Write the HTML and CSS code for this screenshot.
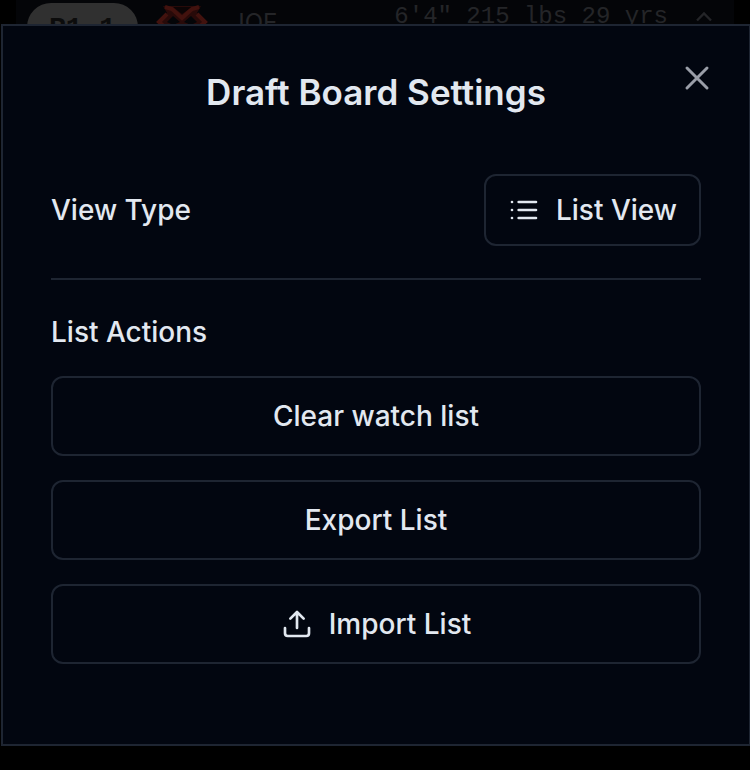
FILE: index.html
```html
<!DOCTYPE html>
<html lang="en">
<head>
<meta charset="utf-8">
<meta name="viewport" content="width=device-width, initial-scale=1">
<title>Draft Board Settings</title>
<link rel="stylesheet" href="styles.css">
</head>
<body>
<div class="board" aria-hidden="true">
  <div class="player">
    <span class="pick">R1.1</span>
    <svg class="team" viewBox="0 0 54 40">
      <path fill="#280a09" d="M8 3H46L42 10 52 19 46 30 27 38 8 30 2 19 12 10Z"/>
      <path fill="#0c0405" d="M18 4H37L27 11Z"/>
      <path fill="#040508" d="M18 13 25 19 18 22 12 19ZM36 13 29 19 36 22 42 19Z"/>
      <path fill="none" stroke="#42120e" stroke-width="4" d="M10 4 17 6 27 15 37 6 44 4M12 11 4 19 11 25M42 11 50 19 43 25"/>
    </svg>
    <span class="first-name">JOE</span>
    <span class="vitals">6'4" 215 lbs 29 yrs</span>
    <svg class="chevron" viewBox="0 0 24 24"><path d="m6 15 6-6 6 6"/></svg>
  </div>
</div>
<main class="dialog" role="dialog" aria-labelledby="title">
  <h1 class="title" id="title">Draft Board Settings</h1>
  <button class="close" type="button" aria-label="Close">
    <svg class="close-icon" viewBox="0 0 28 28"><path d="m4 4 20 20M24 4 4 24"/></svg>
  </button>
  <section class="view-row">
    <h2 class="label">View Type</h2>
    <button class="button compact" type="button">
      <svg class="icon" viewBox="0 0 24 24"><path d="M8 6h13M8 12h13M8 18h13M3 6h.01M3 12h.01M3 18h.01"/></svg>
      List View
    </button>
  </section>
  <section class="actions">
    <h2 class="label">List Actions</h2>
    <button class="button" type="button">Clear watch list</button>
    <button class="button" type="button">Export List</button>
    <button class="button" type="button">
      <svg class="icon" viewBox="0 0 24 24"><path d="M21 15v4a2 2 0 0 1-2 2H5a2 2 0 0 1-2-2v-4M17 8l-5-5-5 5M12 3v12"/></svg>
      Import List
    </button>
  </section>
</main>
</body>
</html>
```
FILE: styles.css
```css
* {
  box-sizing: border-box;
}

body {
  margin: 0;
  min-height: 100vh;
  padding: 24px 0;
  overflow: hidden;
  background: #000;
  color: #e2e8f0;
  font-family: Inter, "Liberation Sans", sans-serif;
}

.board {
  position: absolute;
  inset: 0 16px auto;
  background: #040508;
  color: #242528;
}

.player {
  display: flex;
  align-items: flex-start;
  height: 44px;
  padding: 3px 10px 0 11px;
}

.pick {
  width: 111px;
  padding: 12px 0;
  border-radius: 24px;
  background: #303030;
  color: #0c0c0c;
  font: 700 28px/28px "Liberation Mono", monospace;
  text-align: center;
}

.team {
  width: 54px;
  height: 40px;
  margin-left: 17px;
}

.first-name {
  margin: 6px auto 0 22px;
  font-size: 24px;
  line-height: 28px;
}

.vitals {
  font: 24px/28px "Liberation Mono", monospace;
}

.chevron {
  width: 40px;
  height: 28px;
  margin-left: 16px;
  fill: none;
  stroke: currentColor;
  stroke-width: 2;
}

.dialog {
  position: relative;
  margin: 0 -1px 0 1px;
  padding: 48px 48px 80px;
  border: 2px solid #1e2532;
  background: #020610;
}

.title {
  margin: 0 0 64px;
  font-size: 35px;
  font-weight: 600;
  line-height: 36px;
  text-align: center;
}

.close {
  position: absolute;
  top: 38px;
  right: 38px;
  padding: 0;
  border: 0;
  background: none;
  color: #9a9ea8;
}

.close-icon {
  display: block;
  width: 28px;
  height: 28px;
  fill: none;
  stroke: currentColor;
  stroke-width: 3;
  stroke-linecap: round;
}

.view-row {
  display: flex;
  align-items: center;
  justify-content: space-between;
  padding-bottom: 32px;
  border-bottom: 2px solid #1e2532;
}

.label {
  margin: 0;
  font-size: 28px;
  font-weight: 500;
  line-height: 40px;
}

.button {
  display: flex;
  align-items: center;
  justify-content: center;
  gap: 16px;
  min-height: 80px;
  padding: 0 22px;
  border: 2px solid #1e2532;
  border-radius: 12px;
  background: transparent;
  color: inherit;
  font: 500 28px/40px Inter, "Liberation Sans", sans-serif;
}

.compact {
  min-height: 72px;
}

.icon {
  width: 32px;
  height: 32px;
  fill: none;
  stroke: currentColor;
  stroke-width: 2;
  stroke-linecap: round;
  stroke-linejoin: round;
}

.actions {
  display: grid;
  gap: 24px;
  padding-top: 32px;
}
```
